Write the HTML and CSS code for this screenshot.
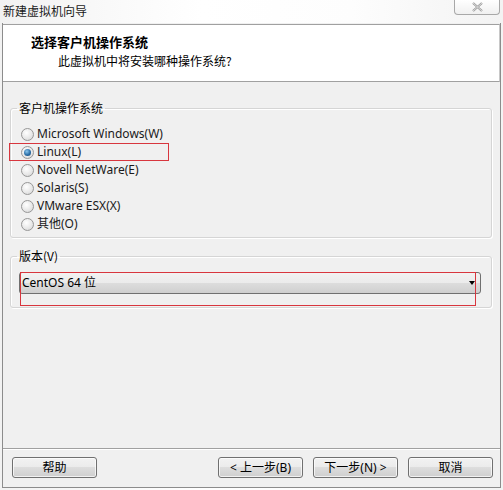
FILE: index.html
```html
<!DOCTYPE html>
<html lang="zh-CN">
<head>
<meta charset="utf-8">
<link rel="stylesheet" href="styles.css">
</head>
<body>
<div class="titlebar">
  <span class="title">新建虚拟机向导</span>
  <span class="close"><svg width="13" height="10" viewBox="0 0 13 10"><path d="M2 1 L11 9 M11 1 L2 9" stroke="#9a9a9a" stroke-width="2.2" fill="none"/><path d="M2 1 L11 9 M11 1 L2 9" stroke="#f4f4f4" stroke-width="0.7" fill="none"/></svg></span>
</div>
<div class="window">
  <div class="header">
    <div class="h-title">选择客户机操作系统</div>
    <div class="h-sub">此虚拟机中将安装哪种操作系统?</div>
  </div>
  <div class="main">
    <fieldset class="group g-os">
      <legend>客户机操作系统</legend>
      <div class="radio"><span class="dot"></span><span class="lbl">Microsoft Windows(W)</span></div>
      <div class="radio checked"><span class="dot"></span><span class="lbl">Linux(L)</span><span class="mark mark-linux"></span></div>
      <div class="radio"><span class="dot"></span><span class="lbl">Novell NetWare(E)</span></div>
      <div class="radio"><span class="dot"></span><span class="lbl">Solaris(S)</span></div>
      <div class="radio"><span class="dot"></span><span class="lbl">VMware ESX(X)</span></div>
      <div class="radio"><span class="dot"></span><span class="lbl">其他(O)</span></div>
    </fieldset>
    <fieldset class="group g-ver">
      <legend>版本(V)</legend>
      <div class="combo"><span class="val">CentOS 64 位</span><span class="arrow"></span><span class="mark mark-combo"></span></div>
    </fieldset>
  </div>
  <div class="footer">
    <button class="btn">帮助</button>
    <span class="spacer"></span>
    <button class="btn">&lt; 上一步(B)</button>
    <button class="btn">下一步(N) &gt;</button>
    <button class="btn btn-cancel">取消</button>
  </div>
</div>
</body>
</html>
```
FILE: styles.css
```css
html, body { margin: 0; padding: 0; }
body {
  width: 503px; height: 490px; overflow: hidden;
  background: linear-gradient(to right, #f2f2f2, #ffffff 40%, #fdfdfd 70%, #f3f3f3);
  font-family: "Noto Sans", "Noto Sans CJK SC", sans-serif;
  font-size: 12px; color: #000;
}
.titlebar {
  height: 23px; display: flex; align-items: flex-start; position: relative;
}
.title {
  margin: 3px 0 0 3px; font-family: "Noto Sans CJK SC", sans-serif; font-size: 12px; line-height: 15px; color: #1a1a1a;
}
.close {
  margin-left: auto; margin-right: 3px; width: 44px; height: 14px;
  border: 1px solid #a8a8a8; border-top: none; border-radius: 0 0 4px 4px;
  background: linear-gradient(#ffffff, #f0f0f0);
  display: flex; align-items: center; justify-content: center;
}
.window {
  margin-left: 2px; width: 499px; height: 465px; box-sizing: border-box;
  border: 1px solid #8c8c8c; border-top: none;
  background: #f0f0f0; display: flex; flex-direction: column;
}
.header {
  margin-top: 1px; height: 58px; box-sizing: border-box; background: #fff;
  border-top: 1px solid #a0a0a0; border-bottom: 1px solid #a0a0a0;
  border-right: 1px solid #c8c8c8;
  padding: 8px 0 0 28px;
}
.h-title { font-family: "Noto Sans CJK SC", sans-serif; font-weight: bold; font-size: 13px; line-height: 17px; }
.h-sub { font-family: "Noto Sans CJK SC", sans-serif; font-size: 12px; line-height: 16px; margin: 3px 0 0 27px; }
.main { flex: 1; padding: 18px 8px 0 7px; }
.group {
  margin: 0; padding: 0 6px; min-width: 0;
  border: 1px solid #d5d5d5; border-radius: 3px;
  box-shadow: inset 1px 1px 0 #fff, 1px 1px 0 #fff;
}
.group legend { padding: 0 2px; font-family: "Noto Sans CJK SC", sans-serif; font-size: 12px; line-height: 16px; }
.g-os { padding-top: 9px; padding-bottom: 4px; }
.g-ver { margin-top: 10px; padding-top: 8px; padding-bottom: 13px; }
.radio { height: 18px; display: flex; align-items: center; position: relative; padding-left: 4px; }
.dot {
  width: 11px; height: 11px; border-radius: 50%; border: 1px solid #979797;
  background: radial-gradient(circle at 40% 35%, #ffffff, #e6e6e6 60%, #cfcfcf);
  position: relative;
}
.checked .dot::after {
  content: ""; position: absolute; left: 2px; top: 2px; width: 7px; height: 7px; border-radius: 50%;
  background: radial-gradient(circle at 40% 35%, #8ac6ee, #2b6fa8 55%, #13436e);
}
.lbl { margin-left: 3px; font-size: 12px; line-height: 16px; color: #1a1a1a; }
.mark { position: absolute; border: 1px solid #d8363e; pointer-events: none; }
.mark-linux { left: -8px; top: 0px; width: 158px; height: 16px; }
.combo {
  margin: 0 4px 0 2px; height: 22px; box-sizing: border-box; position: relative;
  border: 1px solid #707070; border-radius: 3px;
  background: linear-gradient(#f2f2f2 0%, #ebebeb 50%, #dddddd 50%, #cfcfcf 100%);
  display: flex; align-items: center; padding-left: 2px;
}
.val { font-family: "Noto Sans", "Noto Sans CJK SC", sans-serif; font-size: 12px; line-height: 16px; }
.arrow {
  margin-left: auto; margin-right: 5px; width: 0; height: 0;
  border-left: 3.5px solid transparent; border-right: 3.5px solid transparent; border-top: 4px solid #000;
}
.mark-combo { left: 0px; top: -1px; width: 454px; height: 32px; }
.footer {
  height: 39px; box-sizing: border-box; border-top: 1px solid #a0a0a0;
  box-shadow: inset 0 1px 0 #fff;
  display: flex; align-items: flex-start; padding: 8px 0 0 9px;
}
.spacer { flex: 1; }
.btn {
  width: 85px; height: 21px; margin: 0 10px 0 0; padding: 0;
  border: 1px solid #707070; border-radius: 3px;
  background: linear-gradient(#f2f2f2 0%, #ebebeb 50%, #dddddd 50%, #cfcfcf 100%);
  box-shadow: inset 0 0 0 1px rgba(255,255,255,0.7);
  font-family: "Noto Sans", "Noto Sans CJK SC", sans-serif; font-size: 12px; line-height: 16px; color: #000;
}
.btn-cancel { margin-right: 7px; }
```
